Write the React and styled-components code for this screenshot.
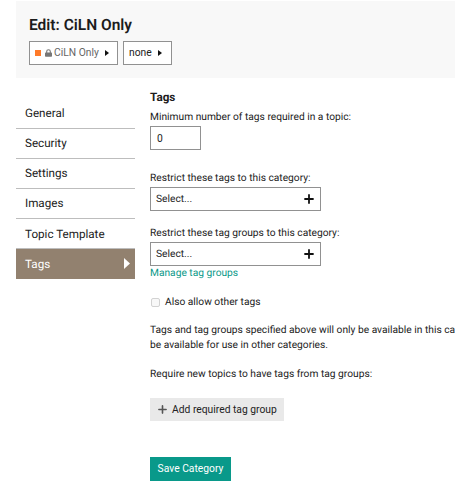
import React from "react";
import styled, { createGlobalStyle } from "styled-components";

const GlobalStyle = createGlobalStyle`
  *, *::before, *::after { box-sizing: border-box; }
  body {
    margin: 0;
    background: #fff;
    color: #222;
    font: 400 10.23px/14px Roboto, sans-serif;
    text-rendering: geometricPrecision;
    overflow: hidden;
  }
`;

const Page = styled.div`
  width: 455px;
  height: 500px;
  padding: 1px 0 0 16px;
  overflow: hidden;
`;

const Header = styled.header`
  height: 77px;
  padding: 14px 0 0 13px;
  background: #f8f8f8;
`;

const Title = styled.h1`
  margin: 0 0 6px;
  height: 20px;
  font-size: 15.5px;
  font-weight: 600;
  line-height: 20px;
  color: #1c1c1c;
`;

const Choosers = styled.div`
  display: flex;
  gap: 5px;
`;

const Chooser = styled.button`
  display: flex;
  align-items: center;
  width: ${(p) => p.$width}px;
  height: 24px;
  padding: 0 0 0 5px;
  border: 1px solid #919191;
  background: #fff;
  color: ${(p) => (p.$muted ? "#666" : "#222")};
  font: 400 10.3px/14px Roboto, sans-serif;
`;

const Swatch = styled.span`
  width: 6px;
  height: 6px;
  margin-right: 4px;
  background: #ff7a29;
`;

const Lock = styled.svg`
  width: 7px;
  height: 8px;
  margin: -1px 2px 0 0;
`;

const Caret = styled.svg`
  width: 4px;
  height: 6px;
  margin-left: 6px;
`;

const Body = styled.div`
  display: flex;
  gap: 15px;
`;

const Nav = styled.nav`
  flex: none;
  width: 119px;
  padding-top: 20.5px;
`;

const NavItem = styled.a`
  display: flex;
  align-items: center;
  justify-content: space-between;
  height: 30.15px;
  padding: 0 5px 0 9px;
  border-bottom: 1px solid ${(p) => (p.$active ? "#92816f" : "#bdbdbd")};
  background: ${(p) => (p.$active ? "#92816f" : "transparent")};
  color: ${(p) => (p.$active ? "#fff" : "#222")};
  font-size: 11.65px;
`;

const NavArrow = styled.svg`
  width: 6px;
  height: 11px;
`;

const Panel = styled.section`
  flex: none;
  width: 340px;
  padding-top: 12px;
  white-space: nowrap;
`;

const Heading = styled.h2`
  margin: 0 0 7px;
  font-size: 11.7px;
  font-weight: 700;
  line-height: 14px;
  color: #1c1c1c;
`;

const Label = styled.div`
  height: 14px;
  margin-bottom: 1px;
`;

const NumberBox = styled.input`
  display: block;
  width: 51px;
  height: 24px;
  margin: 0 0 22px;
  padding: 0 6px;
  border: 1px solid #919191;
  border-radius: 0;
  background: #fff;
  color: #222;
  font: 400 10.3px/14px Roboto, sans-serif;
`;

const Select = styled.div`
  display: flex;
  align-items: center;
  justify-content: space-between;
  width: 171px;
  height: 24px;
  margin-bottom: ${(p) => p.$gap}px;
  padding: 1px 6px 0 5px;
  border: 1px solid #919191;
  background: #fff;
`;

const Plus = styled.svg`
  flex: none;
  width: ${(p) => p.$size}px;
  height: ${(p) => p.$size}px;
  margin-top: -1px;
`;

const Link = styled.a`
  display: block;
  height: 14px;
  margin-bottom: 15px;
  color: #0b9989;
`;

const CheckRow = styled.label`
  display: flex;
  align-items: center;
  height: 14px;
  margin-bottom: 14px;
`;

const Checkbox = styled.input`
  appearance: none;
  width: 9px;
  height: 9px;
  margin: -1px 5px 0 1px;
  border: 1px solid #d2d2d2;
  border-radius: 2px;
  background: #f8f8f8;
`;

const Note = styled.p`
  margin: 0 0 15px;
  line-height: 14.5px;
`;

const AddButton = styled.button`
  display: flex;
  align-items: center;
  gap: 5px;
  width: 134px;
  height: 23px;
  margin: 16px 0 36px;
  padding: 0 0 0 8px;
  border: 0;
  background: #e9e9e9;
  color: #222;
  font: 400 10.3px/14px Roboto, sans-serif;
`;

const SaveButton = styled.button`
  display: block;
  width: 81px;
  height: 24px;
  padding: 0;
  border: 0;
  background: #09998a;
  color: #fff;
  font: 400 10.3px/14px Roboto, sans-serif;
`;

const navItems = ["General", "Security", "Settings", "Images", "Topic Template", "Tags"];

const CaretIcon = () => (
  <Caret viewBox="0 0 4 6"><path d="M0 0l4 3-4 3z" fill="#111" /></Caret>
);

const PlusIcon = ({ size, color }) => (
  <Plus $size={size} viewBox="0 0 10 10">
    <path d="M5 1v8M1 5h8" stroke={color} strokeWidth="1.8" strokeLinecap="round" />
  </Plus>
);

export default function App() {
  return (
    <>
      <GlobalStyle />
      <Page>
        <Header>
          <Title>Edit: CiLN Only</Title>
          <Choosers>
            <Chooser $width={89} $muted>
              <Swatch />
              <Lock viewBox="0 0 7 8">
                <path d="M1.7 4V2.5a1.8 1.8 0 0 1 3.6 0V4" fill="none" stroke="#777" strokeWidth="1.1" />
                <rect y="3.5" width="7" height="4.2" rx="0.7" fill="#777" />
              </Lock>
              CiLN Only
              <CaretIcon />
            </Chooser>
            <Chooser $width={49}>
              none
              <CaretIcon />
            </Chooser>
          </Choosers>
        </Header>
        <Body>
          <Nav>
            {navItems.map((item) => (
              <NavItem key={item} $active={item === "Tags"}>
                {item}
                {item === "Tags" && (
                  <NavArrow viewBox="0 0 6 11"><path d="M0 0l6 5.5L0 11z" fill="#fff" /></NavArrow>
                )}
              </NavItem>
            ))}
          </Nav>
          <Panel>
            <Heading>Tags</Heading>
            <Label>Minimum number of tags required in a topic:</Label>
            <NumberBox defaultValue="0" />
            <Label>Restrict these tags to this category:</Label>
            <Select $gap={16}>Select...<PlusIcon size={10} color="#111" /></Select>
            <Label>Restrict these tag groups to this category:</Label>
            <Select $gap={1}>Select...<PlusIcon size={10} color="#111" /></Select>
            <Link>Manage tag groups</Link>
            <CheckRow><Checkbox type="checkbox" />Also allow other tags</CheckRow>
            <Note>
              Tags and tag groups specified above will only be available in this ca
              <br />
              be available for use in other categories.
            </Note>
            <Label>Require new topics to have tags from tag groups:</Label>
            <AddButton><PlusIcon size={9} color="#555" />Add required tag group</AddButton>
            <SaveButton>Save Category</SaveButton>
          </Panel>
        </Body>
      </Page>
    </>
  );
}
